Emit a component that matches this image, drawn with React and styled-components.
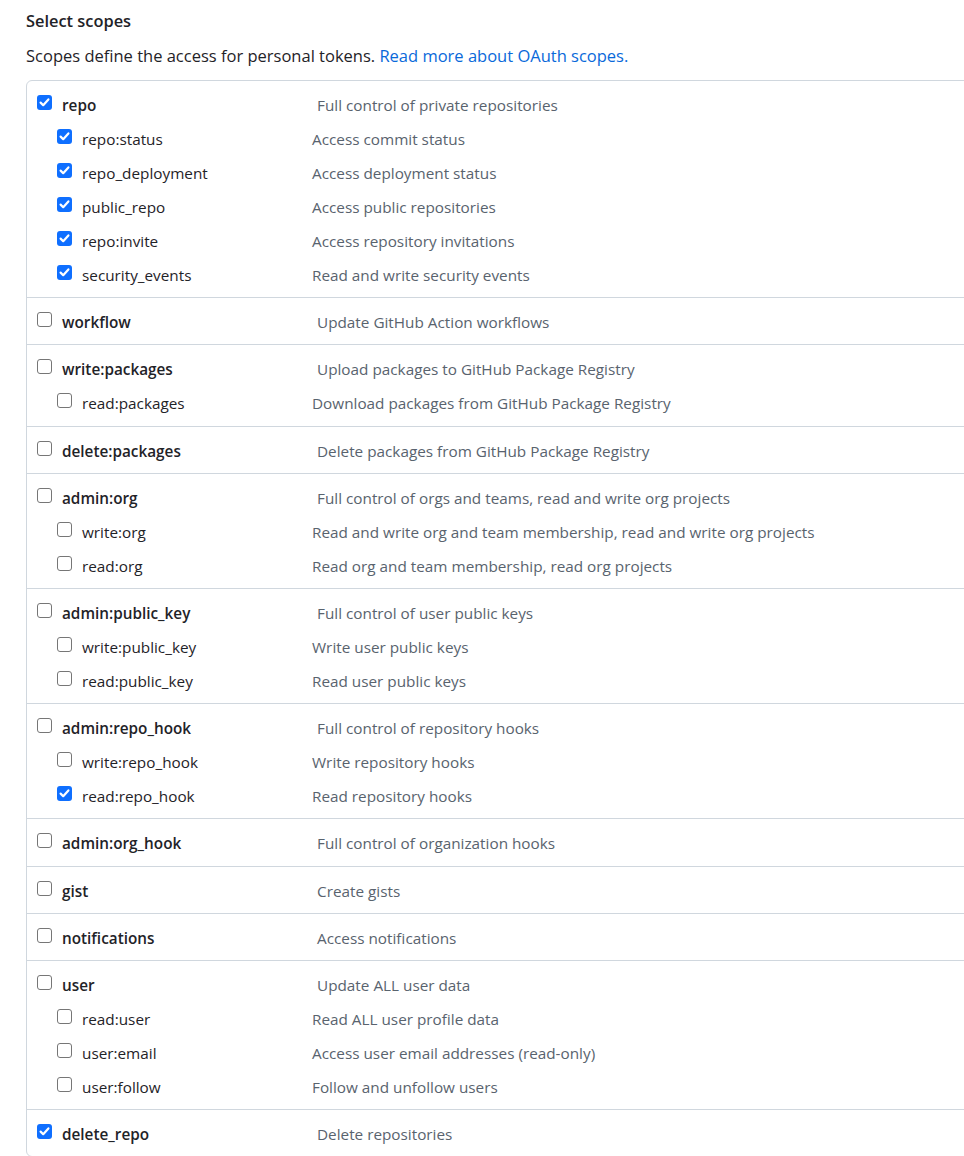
import React from 'react'
import styled, { createGlobalStyle } from 'styled-components'

const GlobalStyle = createGlobalStyle`
  html, body {
    margin: 0;
    padding: 0;
    background: #ffffff;
    overflow: hidden;
  }
  body {
    font-family: "Open Sans", "Noto Sans", "Liberation Sans", sans-serif;
    color: #1f2328;
  }
`

const scopes = [
  {
    name: 'repo', desc: 'Full control of private repositories', checked: true,
    children: [
      { name: 'repo:status', desc: 'Access commit status', checked: true },
      { name: 'repo_deployment', desc: 'Access deployment status', checked: true },
      { name: 'public_repo', desc: 'Access public repositories', checked: true },
      { name: 'repo:invite', desc: 'Access repository invitations', checked: true },
      { name: 'security_events', desc: 'Read and write security events', checked: true },
    ],
  },
  { name: 'workflow', desc: 'Update GitHub Action workflows' },
  {
    name: 'write:packages', desc: 'Upload packages to GitHub Package Registry',
    children: [
      { name: 'read:packages', desc: 'Download packages from GitHub Package Registry' },
    ],
  },
  { name: 'delete:packages', desc: 'Delete packages from GitHub Package Registry' },
  {
    name: 'admin:org', desc: 'Full control of orgs and teams, read and write org projects',
    children: [
      { name: 'write:org', desc: 'Read and write org and team membership, read and write org projects' },
      { name: 'read:org', desc: 'Read org and team membership, read org projects' },
    ],
  },
  {
    name: 'admin:public_key', desc: 'Full control of user public keys',
    children: [
      { name: 'write:public_key', desc: 'Write user public keys' },
      { name: 'read:public_key', desc: 'Read user public keys' },
    ],
  },
  {
    name: 'admin:repo_hook', desc: 'Full control of repository hooks',
    children: [
      { name: 'write:repo_hook', desc: 'Write repository hooks' },
      { name: 'read:repo_hook', desc: 'Read repository hooks', checked: true },
    ],
  },
  { name: 'admin:org_hook', desc: 'Full control of organization hooks' },
  { name: 'gist', desc: 'Create gists' },
  { name: 'notifications', desc: 'Access notifications' },
  {
    name: 'user', desc: 'Update ALL user data',
    children: [
      { name: 'read:user', desc: 'Read ALL user profile data' },
      { name: 'user:email', desc: 'Access user email addresses (read-only)' },
      { name: 'user:follow', desc: 'Follow and unfollow users' },
    ],
  },
  { name: 'delete_repo', desc: 'Delete repositories', checked: true },
]

const Checkbox = ({ checked }) => (
  <Box $checked={checked}>
    {checked && (
      <svg width="15" height="15" viewBox="0 0 15 15">
        <path d="M3.6 7.6 L6.2 10.2 L11.4 4.4" fill="none" stroke="#fff" strokeWidth="2.2" strokeLinecap="round" strokeLinejoin="round" />
      </svg>
    )}
  </Box>
)

const ScopeRow = ({ scope, child }) => (
  <Row $child={child}>
    <Checkbox checked={scope.checked} />
    <Label $child={child}>{scope.name}</Label>
    <Desc>{scope.desc}</Desc>
  </Row>
)

const App = () => {
  return (
    <Page>
      <GlobalStyle />
      <Heading>Select scopes</Heading>
      <Note>
        Scopes define the access for personal tokens. <Link>Read more about OAuth scopes.</Link>
      </Note>
      <ScopeList>
        {scopes.map(s => (
          <Group key={s.name}>
            <ScopeRow scope={s} />
            {(s.children || []).map(c => (
              <ScopeRow key={c.name} scope={c} child />
            ))}
          </Group>
        ))}
      </ScopeList>
    </Page>
  )
}

export default App

const Page = styled.div`
  padding: 9px 0 0 26px;
  width: 1000px;
`
const Heading = styled.h3`
  margin: 0;
  font-size: 16.4px;
  font-weight: 600;
  line-height: 24px;
  color: #1f2328;
`
const Note = styled.p`
  margin: 11px 0 12px;
  font-size: 16.5px;
  line-height: 24px;
  color: #1f2328;
`
const Link = styled.a`
  color: #0969da;
  text-decoration: none;
`
const ScopeList = styled.div`
  border: 1px solid #d0d7de;
  border-radius: 6px;
  width: 1000px;
`
const Group = styled.div`
  display: flex;
  flex-direction: column;
  gap: 10px;
  padding: 12px 0 10.2px;
  & + & {
    border-top: 1px solid #d0d7de;
  }
`
const Row = styled.div`
  display: flex;
  align-items: flex-start;
  height: 24px;
  padding-left: ${p => (p.$child ? '30px' : '10px')};
  font-size: 15.3px;
  line-height: 24px;
`
const Box = styled.span`
  flex: none;
  display: flex;
  width: 15px;
  height: 15px;
  margin-top: 2px;
  margin-right: 10px;
  box-sizing: border-box;
  border-radius: 3px;
  background: ${p => (p.$checked ? '#0f6fff' : '#ffffff')};
  border: ${p => (p.$checked ? 'none' : '1px solid #767676')};
`
const Label = styled.span`
  flex: none;
  width: ${p => (p.$child ? '230px' : '255px')};
  font-weight: ${p => (p.$child ? 400 : 600)};
  color: #1f2328;
`
const Desc = styled.span`
  color: #59636e;
  white-space: nowrap;
`
